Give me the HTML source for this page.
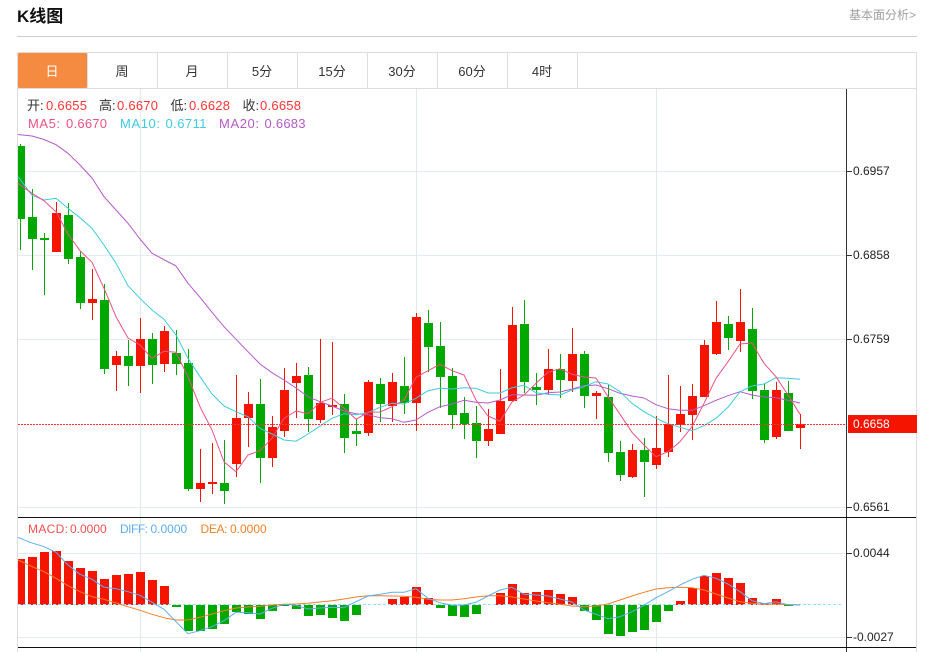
<!DOCTYPE html>
<html lang="zh">
<head>
<meta charset="utf-8">
<title>K线图</title>
<style>
html,body{margin:0;padding:0;background:#fff;width:925px;height:652px;overflow:hidden}
svg{display:block;position:absolute;left:0;top:0}
text{font-family:"Liberation Sans","Noto Sans CJK SC",sans-serif}
</style>
</head>
<body>
<svg width="925" height="652" viewBox="0 0 925 652" xmlns="http://www.w3.org/2000/svg">
<rect width="925" height="652" fill="#fff"/>
<!-- header -->
<text x="17" y="22" font-size="17" font-weight="700" fill="#111">K线图</text>
<text x="849" y="19" font-size="12" fill="#a0a0a0">基本面分析&gt;</text>
<path d="M17 36.5H917" stroke="#ccc" fill="none"/>
<!-- frame -->
<path d="M17.5 652V52.5H916.5V652M17 88.5H917" stroke="#ddd" fill="none"/>
<path d="M87.5 53V88M157.5 53V88M227.5 53V88M297.5 53V88M367.5 53V88M437.5 53V88M507.5 53V88M577.5 53V88" stroke="#ddd" fill="none"/>
<rect x="18" y="53" width="69" height="35" rx="1" fill="#f58b41"/>
<g font-size="13" fill="#333" text-anchor="middle">
<text x="52" y="76" fill="#fff">日</text>
<text x="122" y="76">周</text>
<text x="192" y="76">月</text>
<text x="262" y="76">5分</text>
<text x="332" y="76">15分</text>
<text x="402" y="76">30分</text>
<text x="472" y="76">60分</text>
<text x="542" y="76">4时</text>
</g>
<!-- grid -->
<path d="M18 171.5H847M18 255.5H847M18 339.5H847M18 507.5H847M18 553.5H847M18 637.5H847" stroke="#e4ebf1" fill="none"/>
<path d="M140.5 89V652M416.5 89V652M656.5 89V652" stroke="#e0eaf1" fill="none"/>
<!-- wicks -->
<path stroke="#00a800" fill="none" d="M20.5 144V250M32.5 189V270M44.5 233V295M68.5 203V264M80.5 251V309M104.5 284V374M128.5 340V386M152.5 333V384M176.5 330V375M188.5 349V491M224.5 440V504M260.5 379V483M308.5 367V432M344.5 394V453M356.5 419V446M380.5 378V422M404.5 357V414M428.5 310V372M440.5 322V408M452.5 368V429M464.5 397V439M476.5 406V458M524.5 300V393M536.5 373V405M560.5 354V398M584.5 351V408M608.5 385V462M620.5 441V481M644.5 438V497M728.5 316V350M752.5 308V399M764.5 384V443M788.5 381V431"/>
<path stroke="#f51400" fill="none" d="M56.5 202V252M92.5 269V320M116.5 351V391M140.5 318V393M164.5 326V372M200.5 449V502M212.5 443V494M236.5 375V477M248.5 392V447M272.5 416V467M284.5 368V437M296.5 363V418M320.5 339V423M332.5 342V415M368.5 380V436M392.5 373V422M416.5 313V431M488.5 409V446M500.5 369V434M512.5 307V401M548.5 349V395M572.5 328V392M596.5 391V419M632.5 444V478M656.5 416V469M668.5 375V457M680.5 386V432M692.5 384V440M704.5 340V397M716.5 301V355M740.5 289V352M776.5 382V439M800.5 414V449"/>
<!-- bodies -->
<path fill="#00a800" d="M18 146h7V219h-7zM28 217h9V239h-9zM40 238h9V240h-9zM64 215h9V259h-9zM76 257h9V303h-9zM100 300h9V369h-9zM124 356h9V366h-9zM148 339h9V365h-9zM172 353h9V364h-9zM184 363h9V489h-9zM220 483h9V491h-9zM256 404h9V458h-9zM304 375h9V419h-9zM340 404h9V438h-9zM352 431h9V434h-9zM376 384h9V404h-9zM400 386h9V403h-9zM424 323h9V347h-9zM436 346h9V377h-9zM448 376h9V415h-9zM460 413h9V424h-9zM472 423h9V441h-9zM520 324h9V382h-9zM532 387h9V390h-9zM556 369h9V380h-9zM580 354h9V396h-9zM604 397h9V453h-9zM616 452h9V475h-9zM640 450h9V462h-9zM724 324h9V338h-9zM748 329h9V391h-9zM760 390h9V440h-9zM784 393h9V431h-9z"/>
<path fill="#f51400" d="M52 213h9V252h-9zM88 299h9V303h-9zM112 356h9V365h-9zM136 339h9V366h-9zM160 331h9V364h-9zM196 483h9V489h-9zM208 482h9V484h-9zM232 418h9V464h-9zM244 404h9V418h-9zM268 427h9V458h-9zM280 390h9V431h-9zM292 376h9V383h-9zM316 403h9V420h-9zM328 405h9V407h-9zM364 382h9V433h-9zM388 382h9V406h-9zM412 317h9V403h-9zM484 429h9V441h-9zM496 401h9V434h-9zM508 325h9V401h-9zM544 369h9V390h-9zM568 354h9V381h-9zM592 393h9V396h-9zM628 450h9V477h-9zM652 448h9V465h-9zM664 424h9V452h-9zM676 414h9V425h-9zM688 396h9V415h-9zM700 345h9V397h-9zM712 322h9V354h-9zM736 322h9V341h-9zM772 390h9V437h-9zM796 424h9V428h-9z"/>
<!-- MA lines -->
<polyline fill="none" stroke="#b45ac8" stroke-width="1" stroke-linejoin="round" points="18,134.5 32,136 44,139.5 56,144.7 68,153.3 80,165 92,178 104,196.7 116,210 128,223.3 140,239 152,253.3 176,266 188,283.3 200,297.3 212,312.3 224,326.7 236,339.3 248,351.7 260,364 272,372.7 284,380 296,388 308,396.7 320,401.7 332,406 344,411 356,413.7 368,414.7 380,417.7 392,418.7 404,422.3 416,420 428,412.3 440,406.7 452,404 464,400.3 476,402.3 488,403 500,400 512,394.7 524,395 536,395.3 548,392.7 560,392 572,389 584,385.7 596,385 608,388.7 620,393.3 632,396 644,398 656,404.7 668,408.7 680,410.3 692,410.3 704,405.7 716,400.3 728,395.7 740,391.7 752,395 764,397 776,397.7 788,400.3 800,403"/>
<polyline fill="none" stroke="#3ecbe0" stroke-width="1" stroke-linejoin="round" points="18,176.7 32,195.3 44,200 56,198.3 68,208.3 80,217.7 92,228.3 104,245 116,263.3 128,285.7 140,298.3 152,310 164,319.3 176,335 188,358.3 200,376.7 212,394 224,406 236,411.7 248,416.7 260,428.3 272,434 284,440 296,441.3 308,434 320,426 332,418.3 344,413.7 356,414.7 368,412.7 380,407.3 392,403.3 404,404 416,398.3 428,390.7 440,388.3 452,389 464,387.7 476,388.3 488,393 500,393 512,387.7 524,385.3 536,392.7 548,394.3 560,395 572,390 584,386.7 596,381.7 608,384 620,391.7 632,403.3 644,411.7 656,418.3 668,423.7 680,427.3 692,430.7 704,425.7 716,418.3 728,407.3 740,391.7 752,386 764,384 776,377.7 788,378.3 800,379.3"/>
<polyline fill="none" stroke="#ec5282" stroke-width="1" stroke-linejoin="round" points="18,183.3 32,193.3 44,200.7 56,211.7 68,234 80,250.7 92,262.3 104,288.3 116,316.7 128,338 140,345 152,358.3 164,351.3 176,352.3 188,376.7 200,406.7 212,430 224,461.7 236,471.7 248,455 260,450.7 272,438.3 284,418.3 296,411 308,413.7 320,402.3 332,398.3 344,408.3 356,419.3 368,412.3 380,412 392,406.7 404,400 416,377.3 428,370.7 440,364.3 452,370.7 464,375 476,400 488,416 500,421.3 512,402 524,395 536,383.3 548,372.3 560,368.7 572,374.3 584,377 596,378 608,396.7 620,414.3 632,432.3 644,445 656,456.7 668,451.7 680,441.7 692,426.7 704,403.3 716,378.3 728,361.7 740,344 752,343 764,363.3 776,376.7 788,395 800,414.3"/>
<!-- MACD hist -->
<path fill="#f51400" d="M18 559h7V605h-7zM28 557h9V605h-9zM40 552h9V605h-9zM52 551h9V605h-9zM64 561h9V605h-9zM76 568h9V605h-9zM88 571h9V605h-9zM100 579h9V605h-9zM112 575h9V605h-9zM124 574h9V605h-9zM136 572h9V605h-9zM148 580h9V605h-9zM160 586h9V605h-9zM388 599h9V605h-9zM400 597h9V605h-9zM412 587h9V605h-9zM424 598h9V605h-9zM496 593h9V605h-9zM508 584h9V605h-9zM520 593h9V605h-9zM532 592h9V605h-9zM544 590h9V605h-9zM556 594h9V605h-9zM568 597h9V605h-9zM676 601h9V605h-9zM688 588h9V605h-9zM700 576h9V605h-9zM712 573h9V605h-9zM724 578h9V605h-9zM736 583h9V605h-9zM748 598h9V605h-9zM760 603h9V605h-9zM772 599h9V605h-9z"/>
<path fill="#00a800" d="M172 605h9V607h-9zM184 605h9V631h-9zM196 605h9V631h-9zM208 605h9V629h-9zM220 605h9V624h-9zM232 605h9V612h-9zM244 605h9V614h-9zM256 605h9V619h-9zM268 605h9V611h-9zM280 605h9V606h-9zM292 605h9V609h-9zM304 605h9V616h-9zM316 605h9V615h-9zM328 605h9V618h-9zM340 605h9V621h-9zM352 605h9V615h-9zM436 605h9V608h-9zM448 605h9V616h-9zM460 605h9V617h-9zM472 605h9V614h-9zM580 605h9V611h-9zM592 605h9V620h-9zM604 605h9V634h-9zM616 605h9V636h-9zM628 605h9V632h-9zM640 605h9V630h-9zM652 605h9V622h-9zM664 605h9V611h-9zM784 605h9V606h-9z"/>
<path d="M18 604.5H843" stroke="#9adff0" stroke-dasharray="3 2" fill="none"/>
<polyline fill="none" stroke="#f57f29" stroke-width="1" stroke-linejoin="round" points="18,560 30,565.7 44,571.7 56,578.3 68,585.7 80,591.7 92,596.7 104,599.3 116,603 128,606.7 140,610.3 152,614.3 164,617.7 176,620 188,620 200,617.3 212,614 224,610.7 236,608 248,607 260,606.3 272,605 284,604.3 296,604 308,603.3 320,602 332,600.7 344,599 356,597 368,595.7 380,595.7 392,596 404,596.3 416,597.3 428,599.3 440,600 452,600 464,598.7 476,597 488,595.7 500,595.7 512,597 524,599 536,601 548,602.7 560,604.3 572,606 584,606.7 596,606 608,604 620,600 632,596 644,592.3 656,589 668,587.7 680,587.3 692,587.7 704,590 716,594 728,598 740,601.7 752,603.3 764,604.3 776,604 788,604.7 800,605"/>
<polyline fill="none" stroke="#5eaef0" stroke-width="1" stroke-linejoin="round" points="18,537.3 30,542.3 44,546.7 56,552.3 68,565 80,574.3 92,579.3 104,587.3 116,588.7 128,591.7 140,595.3 152,602.3 164,609.3 176,621.7 188,633.7 200,630.7 212,626.7 224,620.7 236,612.3 248,612.7 260,614 272,608.3 284,604.3 296,605.3 308,609 320,608 332,607.3 344,607.7 356,601.7 368,596 380,594.3 392,592.3 404,592.3 416,588.7 428,598.3 440,602.7 452,605.3 464,605 476,602.3 488,596 500,590 512,587.3 524,594.3 536,595 548,596 560,599 572,602 584,610 596,614.3 608,618.7 620,616.7 632,611.7 644,605.3 656,597.7 668,591.7 680,585 692,579.3 704,575.3 716,578.3 728,584 740,591.7 752,600.7 764,603.7 776,601.7 788,604.7 800,604.7"/>
<!-- price line -->
<path d="M18 424.5H847" stroke="#f33" stroke-dasharray="2 1" fill="none"/>
<!-- axes -->
<path d="M846.5 89V652" stroke="#333" fill="none"/>
<path d="M18 517.5H916M18 647.5H916" stroke="#111" fill="none"/>
<path d="M847 171.5H852M847 255.5H852M847 339.5H852M847 507.5H852M847 553.5H852M847 637.5H852" stroke="#333" fill="none"/>
<rect x="848" y="415" width="69" height="18" fill="#f51400"/>
<g font-size="12" fill="#222">
<text x="853" y="175">0.6957</text>
<text x="853" y="259">0.6858</text>
<text x="853" y="343">0.6759</text>
<text x="853" y="511">0.6561</text>
<text x="853" y="428" fill="#fff">0.6658</text>
<text x="853" y="557">0.0044</text>
<text x="853" y="641">-0.0027</text>
</g>
<!-- legend -->
<g font-size="13">
<text x="27" y="110" fill="#333">开:</text><text x="46" y="110" fill="#f33" textLength="41">0.6655</text>
<text x="99" y="110" fill="#333">高:</text><text x="117" y="110" fill="#f33" textLength="41">0.6670</text>
<text x="170.5" y="110" fill="#333">低:</text><text x="189" y="110" fill="#f33" textLength="41">0.6628</text>
<text x="242.5" y="110" fill="#333">收:</text><text x="260" y="110" fill="#f33" textLength="41">0.6658</text>
<text x="28" y="128" fill="#ec5282" textLength="32">MA5:</text><text x="66" y="128" fill="#ec5282" textLength="41">0.6670</text>
<text x="120" y="128" fill="#3ecbe0" textLength="40">MA10:</text><text x="165.5" y="128" fill="#3ecbe0" textLength="41">0.6711</text>
<text x="219" y="128" fill="#b45ac8" textLength="40">MA20:</text><text x="264.5" y="128" fill="#b45ac8" textLength="41">0.6683</text>
</g>
<g font-size="12">
<text x="28" y="533" fill="#f05050" textLength="40">MACD:</text><text x="70" y="533" fill="#f05050">0.0000</text>
<text x="120" y="533" fill="#5eaef0" textLength="28">DIFF:</text><text x="150.5" y="533" fill="#5eaef0">0.0000</text>
<text x="200.5" y="533" fill="#f57f29" textLength="27">DEA:</text><text x="230" y="533" fill="#f57f29">0.0000</text>
</g>
</svg>
</body>
</html>
